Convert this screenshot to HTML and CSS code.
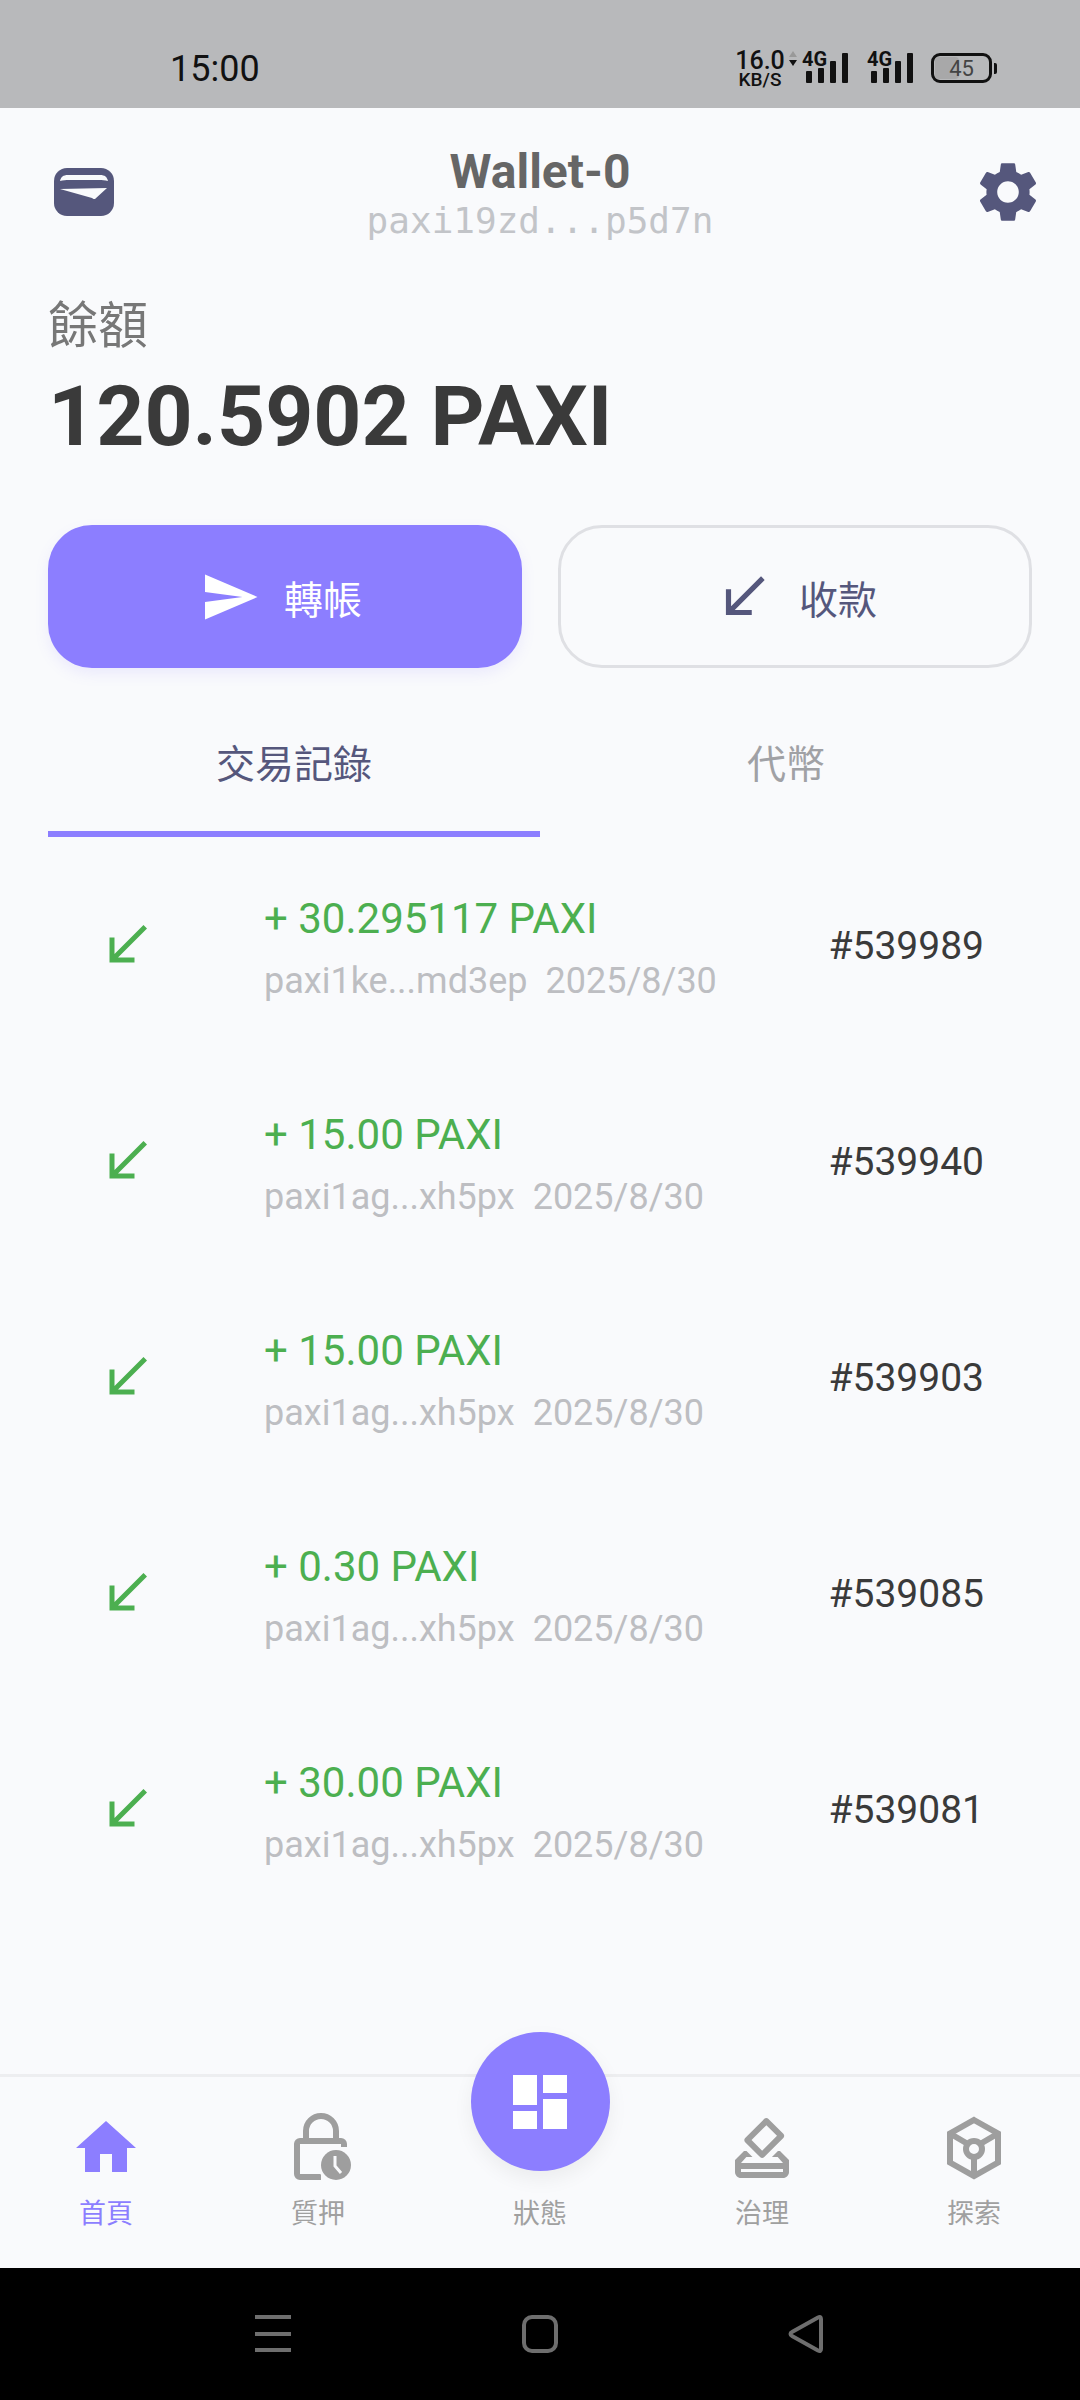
FILE: index.html
```html
<!DOCTYPE html>
<html lang="zh-Hant">

<head>
    <meta charset="UTF-8">
    <meta name="viewport" content="width=device-width, initial-scale=1.0">
    <title>Wallet-0</title>
    <link rel="stylesheet" href="styles.css">
</head>

<body>

    <svg class="defs" width="0" height="0">
        <symbol id="received" viewBox="0 0 24 24">
            <path d="M20 5.41L18.59 4 7 15.59V9H5v10h10v-2H8.41z" />
        </symbol>
    </svg>

    <div class="phone">

        <!-- Status bar -->
        <div class="status-bar">
            <span class="clock">15:00</span>
            <div class="status-icons">
                <div class="speed">
                    <span class="speed-num">16.0</span>
                    <span class="speed-unit">KB/S</span>
                </div>
                <svg class="signal signal-first" width="66" height="40" viewBox="0 -6 66 40">
                    <path class="arrow-up" d="M1 7l4-6 4 6z" />
                    <path d="M1 10h8l-4 6z" />
                    <text x="14" y="16" class="net">4G</text>
                    <rect x="18" y="21" width="6" height="12" rx="1" />
                    <rect x="30" y="18" width="6" height="15" rx="1" />
                    <rect x="42" y="11" width="6" height="22" rx="1" />
                    <rect x="54" y="3" width="6" height="30" rx="1" />
                </svg>
                <svg class="signal" width="46" height="40" viewBox="0 -6 46 40">
                    <text x="0" y="16" class="net">4G</text>
                    <rect x="4" y="21" width="6" height="12" rx="1" />
                    <rect x="16" y="18" width="6" height="15" rx="1" />
                    <rect x="28" y="11" width="6" height="22" rx="1" />
                    <rect x="40" y="3" width="6" height="30" rx="1" />
                </svg>
                <div class="battery">
                    <div class="battery-body">
                        <div class="battery-fill"></div>
                        <span class="battery-num">45</span>
                    </div>
                    <div class="battery-tip"></div>
                </div>
            </div>
        </div>

        <!-- Header -->
        <div class="header">
            <svg class="wallet-icon" width="60" height="48" viewBox="0 0 60 48">
                <rect width="60" height="48" rx="13" fill="#55577c" />
                <path d="M6 13c1-4 3-6 8-6h32c5 0 7 2 8 6-3-1-6-1-9-1H15c-3 0-6 0-9 1z" fill="#f9fafc" />
                <path d="M6 21l47-1-12 11c-1 0-2 0-3-1z" fill="#f9fafc" />
            </svg>
            <div class="wallet-info">
                <div class="wallet-name">Wallet-0</div>
                <div class="wallet-addr">paxi19zd...p5d7n</div>
            </div>
            <svg class="settings-icon" width="72" height="72" viewBox="0 0 24 24">
                <path d="M19.14 12.94c.04-.3.06-.61.06-.94 0-.32-.02-.64-.07-.94l2.03-1.58c.18-.14.23-.41.12-.61l-1.92-3.32c-.12-.22-.37-.29-.59-.22l-2.39.96c-.5-.38-1.03-.7-1.62-.94l-.36-2.54c-.04-.24-.24-.41-.48-.41h-3.84c-.24 0-.43.17-.47.41l-.36 2.54c-.59.24-1.13.57-1.62.94l-2.39-.96c-.22-.08-.47 0-.59.22L2.74 8.87c-.12.21-.08.47.12.61l2.03 1.58c-.05.3-.09.63-.09.94s.02.64.07.94l-2.03 1.58c-.18.14-.23.41-.12.61l1.92 3.32c.12.22.37.29.59.22l2.39-.96c.5.38 1.03.7 1.62.94l.36 2.54c.05.24.24.41.48.41h3.84c.24 0 .44-.17.47-.41l.36-2.54c.59-.24 1.13-.56 1.62-.94l2.39.96c.22.08.47 0 .59-.22l1.92-3.32c.12-.22.07-.47-.12-.61l-2.01-1.58zM12 15.6c-1.98 0-3.6-1.62-3.6-3.6s1.62-3.6 3.6-3.6 3.6 1.62 3.6 3.6-1.62 3.6-3.6 3.6z" />
            </svg>
        </div>

        <!-- Balance -->
        <div class="balance">
            <div class="balance-label">餘額</div>
            <div class="balance-amount">120.5902 PAXI</div>
        </div>

        <!-- Actions -->
        <div class="actions">
            <div class="btn btn-primary">
                <svg width="60" height="60" viewBox="0 0 24 24">
                    <path d="M2.01 21L23 12 2.01 3 2 10l15 2-15 2z" />
                </svg>
                <span>轉帳</span>
            </div>
            <div class="btn btn-outline">
                <svg width="62" height="62" viewBox="0 0 24 24">
                    <use href="#received" />
                </svg>
                <span>收款</span>
            </div>
        </div>

        <!-- Tabs -->
        <div class="tabs">
            <div class="tab tab-active">交易記錄</div>
            <div class="tab">代幣</div>
        </div>

        <!-- Transactions -->
        <div class="tx-list">
            <div class="tx-row">
                <svg class="tx-icon" width="60" height="60" viewBox="0 0 24 24"><use href="#received" /></svg>
                <div class="tx-main">
                    <div class="tx-amount">+ 30.295117 PAXI</div>
                    <div class="tx-meta"><span>paxi1ke...md3ep</span><span>2025/8/30</span></div>
                </div>
                <div class="tx-height">#539989</div>
            </div>
            <div class="tx-row">
                <svg class="tx-icon" width="60" height="60" viewBox="0 0 24 24"><use href="#received" /></svg>
                <div class="tx-main">
                    <div class="tx-amount">+ 15.00 PAXI</div>
                    <div class="tx-meta"><span>paxi1ag...xh5px</span><span>2025/8/30</span></div>
                </div>
                <div class="tx-height">#539940</div>
            </div>
            <div class="tx-row">
                <svg class="tx-icon" width="60" height="60" viewBox="0 0 24 24"><use href="#received" /></svg>
                <div class="tx-main">
                    <div class="tx-amount">+ 15.00 PAXI</div>
                    <div class="tx-meta"><span>paxi1ag...xh5px</span><span>2025/8/30</span></div>
                </div>
                <div class="tx-height">#539903</div>
            </div>
            <div class="tx-row">
                <svg class="tx-icon" width="60" height="60" viewBox="0 0 24 24"><use href="#received" /></svg>
                <div class="tx-main">
                    <div class="tx-amount">+ 0.30 PAXI</div>
                    <div class="tx-meta"><span>paxi1ag...xh5px</span><span>2025/8/30</span></div>
                </div>
                <div class="tx-height">#539085</div>
            </div>
            <div class="tx-row">
                <svg class="tx-icon" width="60" height="60" viewBox="0 0 24 24"><use href="#received" /></svg>
                <div class="tx-main">
                    <div class="tx-amount">+ 30.00 PAXI</div>
                    <div class="tx-meta"><span>paxi1ag...xh5px</span><span>2025/8/30</span></div>
                </div>
                <div class="tx-height">#539081</div>
            </div>
        </div>

        <!-- Bottom navigation -->
        <div class="bottom-nav">
            <div class="nav-item nav-active">
                <svg width="72" height="72" viewBox="0 0 24 24">
                    <path d="M10 20v-6h4v6h5v-8h3L12 3 2 12h3v8z" />
                </svg>
                <span>首頁</span>
            </div>
            <div class="nav-item">
                <svg width="72" height="72" viewBox="-12 -3 72 72">
                    <path class="line" d="M50 32v-3a3 3 0 0 0-3-3H6a3 3 0 0 0-3 3v30a3 3 0 0 0 3 3h21" />
                    <path class="line" d="M12 26V16a15 15 0 0 1 30 0v10" />
                    <circle cx="42" cy="50" r="18" fill="#f9fafc" stroke="none" />
                    <circle cx="42" cy="50" r="15" />
                    <path d="M41 41v10l6 7" fill="none" stroke="#f9fafc" stroke-width="3" />
                </svg>
                <span>質押</span>
            </div>
            <div class="nav-item nav-center">
                <div class="fab">
                    <svg width="72" height="72" viewBox="0 0 24 24">
                        <path d="M3 13h8V3H3v10zm0 8h8v-6H3v6zm10 0h8V11h-8v10zm0-18v6h8V3h-8z" />
                    </svg>
                </div>
                <span>狀態</span>
            </div>
            <div class="nav-item">
                <svg width="72" height="72" viewBox="0 0 24 24">
                    <path d="M18 13h-.68l-2 2h1.91L19 17H5l1.78-2h2.05l-2-2H6l-3 3v4c0 1.1.89 2 1.99 2H19c1.1 0 2-.89 2-2v-4l-3-3zm1 7H5v-1h14v1zm-7.66-4.98c.39.39 1.02.39 1.41 0l6.36-6.36c.39-.39.39-1.02 0-1.41L14.16 2.3c-.38-.4-1.01-.4-1.4-.01L6.39 8.66c-.39.39-.39 1.02 0 1.41l4.95 4.95zm2.12-10.61L17 7.95l-4.95 4.95-3.54-3.54 4.95-4.95z" />
                </svg>
                <span>治理</span>
            </div>
            <div class="nav-item">
                <svg width="72" height="72" viewBox="0 0 72 72">
                    <path class="line" d="M36 8l24 13.5v29L36 64 12 50.500v-29zM12 21.500l17 10M60 21.500l-17 10M36 45v19" />
                    <circle class="line" cx="36" cy="37" r="8" />
                </svg>
                <span>探索</span>
            </div>
        </div>

        <!-- System navigation -->
        <div class="system-bar">
            <svg width="36" height="38" viewBox="0 0 36 38">
                <path d="M0 2h36M0 19h36M0 35h36" />
            </svg>
            <svg width="36" height="38" viewBox="0 0 36 38">
                <rect x="2" y="2" width="32" height="34" rx="8" />
            </svg>
            <svg width="36" height="38" viewBox="0 0 36 38">
                <path d="M33 4c0-2-1-2.500-3-1.500L4 17c-2 1-2 3 0 4l26 14.500c2 1 3 .5 3-1.500z" />
            </svg>
        </div>

    </div>

</body>

</html>
```

FILE: styles.css
```css
body {
    margin: 0;
    font-family: 'Roboto', 'Noto Sans CJK TC', sans-serif;
    background: #f9fafc;
}

.defs {
    display: block;
    height: 0;
}

.phone {
    width: 1080px;
    height: 2400px;
    display: flex;
    flex-direction: column;
    overflow: hidden;
}

/* status bar */
.status-bar {
    height: 108px;
    flex: none;
    background: #b8b9bb;
    display: flex;
    justify-content: space-between;
    padding: 49px 83px 0 170px;
    box-sizing: border-box;
    color: #111;
}

.clock {
    font-size: 36px;
    line-height: 40px;
}

.status-icons {
    display: flex;
    align-items: flex-start;
    height: 36px;
    margin-top: 1px;
}

.speed {
    display: flex;
    flex-direction: column;
    align-items: center;
    width: 48px;
    margin-right: 4px;
}

.speed-num {
    font-size: 25px;
    font-weight: 500;
    line-height: 22px;
}

.speed-unit {
    font-size: 19px;
    font-weight: 500;
    line-height: 15px;
}

.signal {
    fill: #111;
    margin-right: 17px;
    margin-top: -6px;
}

.signal-first {
    margin-right: 13px;
}

.signal .arrow-up {
    fill: #999;
}

.net {
    font-size: 20px;
    font-weight: 700;
    font-family: 'Roboto', sans-serif;
}

.battery {
    display: flex;
    align-items: center;
    margin-left: 1px;
    height: 30px;
    margin-top: 3px;
}

.battery-body {
    width: 61px;
    height: 30px;
    box-sizing: border-box;
    border: 3px solid #111;
    border-radius: 9px;
    position: relative;
    display: flex;
    justify-content: center;
    align-items: center;
    overflow: hidden;
}

.battery-fill {
    position: absolute;
    left: 1px;
    top: 1px;
    bottom: 1px;
    width: 24px;
    background: #a8a8a9;
    border-radius: 4px;
}

.battery-num {
    position: relative;
    font-size: 22px;
    color: #444;
}

.battery-tip {
    width: 3px;
    height: 11px;
    margin-left: 2px;
    background: #111;
    border-radius: 0 2px 2px 0;
}

/* header */
.header {
    display: flex;
    justify-content: space-between;
    align-items: center;
    padding: 48px 36px 0 54px;
    height: 136px;
    box-sizing: border-box;
    flex: none;
}

.wallet-icon {
    flex: none;
    margin-top: -16px;
}

.settings-icon {
    fill: #55577c;
    flex: none;
    margin-top: -16px;
}

.wallet-info {
    text-align: center;
    margin-top: -14px;
    margin-right: 6px;
}

.wallet-name {
    font-size: 48px;
    font-weight: 700;
    color: #666;
    line-height: 56px;
}

.wallet-addr {
    font-family: 'DejaVu Sans Mono', monospace;
    font-size: 36px;
    color: #c2c4c8;
    line-height: 42px;
}

/* balance */
.balance {
    padding: 51px 48px 0;
    flex: none;
}

.balance-label {
    font-size: 50px;
    line-height: 62px;
    color: #777;
}

.balance-amount {
    font-size: 84px;
    font-weight: 700;
    color: #3a3a3a;
    line-height: 98px;
    margin-top: 11px;
}

/* buttons */
.actions {
    display: grid;
    grid-template-columns: 1fr 1fr;
    gap: 36px;
    padding: 0 48px;
    margin-top: 59px;
    flex: none;
}

.btn {
    height: 143px;
    box-sizing: border-box;
    border-radius: 44px;
    display: flex;
    align-items: center;
    justify-content: center;
    gap: 24px;
    font-size: 39px;
}

.btn-primary {
    background: #8c7eff;
    color: #fff;
    fill: #fff;
    padding-right: 8px;
    box-shadow: 0 6px 14px rgba(140, 126, 255, 0.12);
}

.btn-outline {
    border: 3px solid #dfe0e4;
    color: #55577c;
    fill: #55577c;
}

/* tabs */
.tabs {
    display: flex;
    padding: 0 48px;
    margin-top: 48px;
    flex: none;
}

.tab {
    flex: 1;
    height: 121px;
    box-sizing: border-box;
    text-align: center;
    font-size: 39px;
    line-height: 98px;
    color: #a0a1a5;
}

.tab-active {
    color: #55577c;
    border-bottom: 6px solid #8c7eff;
}

/* transactions */
.tx-list {
    flex: 1;
}

.tx-row {
    height: 216px;
    display: flex;
    align-items: center;
    padding: 0 48px 0 97px;
}

.tx-icon {
    fill: #4caf50;
    flex: none;
}

.tx-main {
    margin-left: 107px;
    margin-top: 8px;
    flex: 1;
}

.tx-amount {
    font-size: 42px;
    color: #4caf50;
    line-height: 50px;
}

.tx-meta {
    display: flex;
    gap: 18px;
    font-size: 36px;
    color: #bdbec2;
    line-height: 46px;
    margin-top: 14px;
}

.tx-height {
    font-size: 39px;
    color: #3a3a3a;
    margin-right: 48px;
    margin-top: 2px;
}

/* bottom nav */
.bottom-nav {
    height: 194px;
    flex: none;
    box-sizing: border-box;
    border-top: 3px solid #edeef0;
    display: grid;
    grid-template-columns: 212px 212px 1fr 212px 212px;
}

.nav-item {
    display: flex;
    flex-direction: column;
    align-items: center;
    font-size: 27px;
    color: #a0a0a0;
    fill: #9e9e9e;
    padding-top: 35px;
    position: relative;
}

.nav-item span {
    line-height: 36px;
    margin-top: 12px;
}

.nav-item .line {
    fill: none;
    stroke: #9e9e9e;
    stroke-width: 6;
}

.nav-active {
    color: #8c7eff;
    fill: #8c7eff;
}

.nav-center {
    padding-top: 107px;
}

.fab {
    position: absolute;
    top: -45px;
    left: 46.5px;
    width: 139px;
    height: 139px;
    border-radius: 50%;
    background: #8c7eff;
    fill: #fff;
    display: flex;
    align-items: center;
    justify-content: center;
    box-shadow: 0 8px 20px rgba(0, 0, 0, 0.06);
}

/* system bar */
.system-bar {
    height: 132px;
    flex: none;
    background: #000;
    display: flex;
    align-items: flex-start;
    padding: 47px 256px 0 255px;
    box-sizing: border-box;
    justify-content: space-between;
}

.system-bar svg {
    fill: none;
    stroke: #6e6e6e;
    stroke-width: 4;
}
```
